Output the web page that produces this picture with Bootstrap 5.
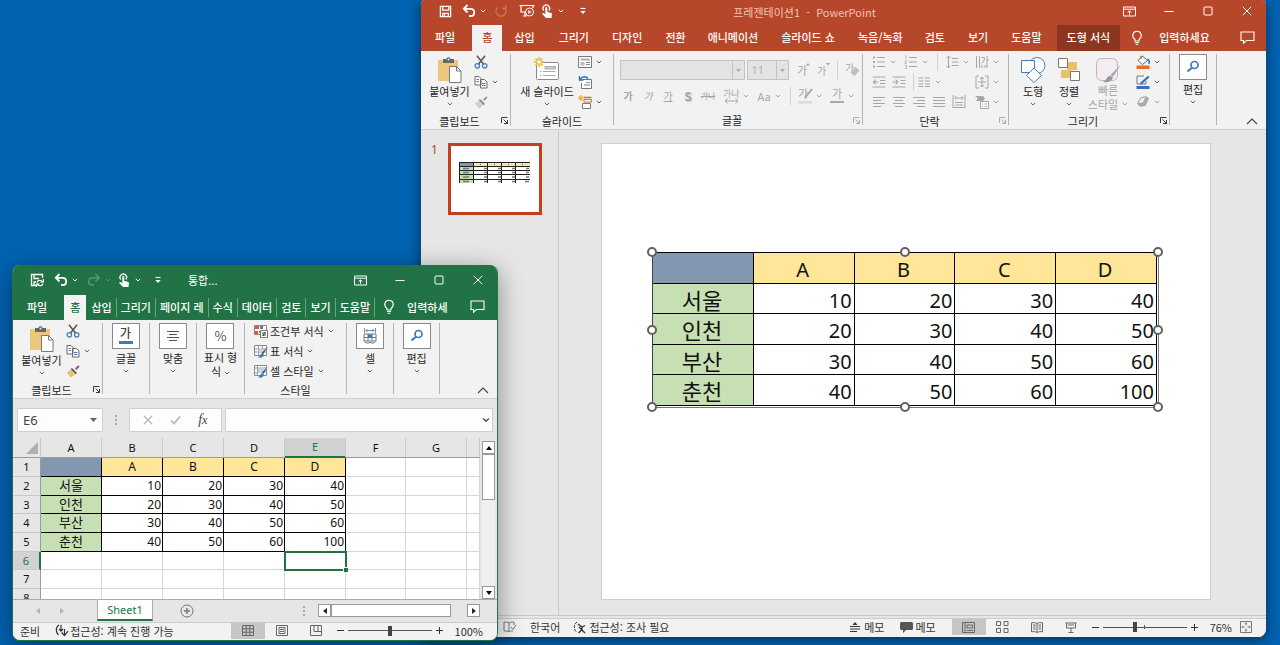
<!DOCTYPE html>
<html lang="ko">
<head>
<meta charset="utf-8">
<meta name="viewport" content="width=device-width, initial-scale=1">
<title>프레젠테이션1 - PowerPoint</title>
<link href="https://cdn.jsdelivr.net/npm/bootstrap@5.3.0/dist/css/bootstrap.min.css" rel="stylesheet">
<style>
html,body{height:100%}
body{font-family:"Noto Sans CJK KR","Noto Sans",sans-serif;font-size:11px;line-height:16px;color:#262626;background:#0063b1;overflow:hidden}
svg{display:block;flex:none;overflow:visible}
.btn{--bs-btn-padding-x:0;--bs-btn-padding-y:0;--bs-btn-border-width:0;--bs-btn-font-size:11px;--bs-btn-line-height:16px;--bs-btn-color:inherit;--bs-btn-disabled-color:#a6a6a6;--bs-btn-disabled-opacity:1;--bs-btn-border-radius:0;--bs-btn-hover-color:inherit;white-space:nowrap}
.desk{height:100vh;position:relative;overflow:hidden}
.win{position:absolute;display:flex;flex-direction:column;background:#e6e6e6;overflow:hidden}
.ppt{left:421px;right:14px;top:0;bottom:8px;border-radius:4px 4px 8px 8px;box-shadow:0 3px 14px rgba(0,0,0,.5)}
.xls{left:12px;width:486px;top:265px;bottom:4px;border-radius:8px;border:1px solid #217346;border-top:0;box-shadow:0 6px 26px rgba(0,0,0,.42)}
.ppt .chrome{background:#b7472a;color:#fff}
.xls .chrome{background:#217346;color:#fff}
.titlebar{height:25px}
.xls .titlebar{height:30px}
.ppt .titlebar{padding:0 0 3px 14px}
.xls .titlebar{padding-left:14px}
.ib{width:20px;height:20px;display:flex!important;align-items:center;justify-content:center}
.cr{width:8px;height:20px;display:flex!important;align-items:center;justify-content:center}
.sys{width:39px;height:22px;display:flex!important;align-items:center;justify-content:center}
.tabs{height:26px;font-weight:500}
.xls .tabs{height:25px}
.tabs a{color:#fff;text-decoration:none;display:flex;align-items:center;white-space:nowrap;padding:0 11px 2px}
.ppt .tabs{padding-left:3px}
.ppt .tabs .on{background:#f2f2f2;color:#b7472a;padding:0 10px 2px;margin:0 1px 0 6px}
.ppt .tabs .ctx{background:#8b3620;padding:0 10px 2px;margin-left:4px}
.xls .tabs a{padding:0 4px 2px}
.xls .tabs .filetab{padding:0 17px 2px 14px}
.xls .tabs .on{background:#f2f2f2;color:#217346;padding:0 6px 2px;margin-right:1px}
.xls .tabs .cut{border-right:1px solid #6aa384;margin:3px 0}
.ribbon{background:#f2f2f2;border-bottom:1px solid #cfcfcf;height:79px;padding-top:1px}
.ribbon use[href="#cv"]{color:#666}
.ribbon .dim use[href="#cv"]{color:#a6a6a6}
.sepv{width:1px;background:#b4b4b4;margin:2px 0 4px;flex:none}
.grp{display:flex;flex-direction:column;flex:none}
.grp .bodyrow{height:60px;display:flex}
.foot{height:18px;display:flex;align-items:center}
.foot span{flex:1;text-align:center}
.launch{width:12px;height:12px}
.launch svg{margin-left:2px}
.big{display:flex!important;flex-direction:column;align-items:center;padding-top:5px!important}
.big .cv{margin-top:3px}
.boxed{display:flex!important;flex-direction:column;align-items:center;padding-top:2px!important}
.boxed .frame{width:28px;height:26px;border:1px solid #8a8a8a;background:#fff;display:flex;align-items:center;justify-content:center;margin-bottom:1px;color:#555}
.boxed .cv{margin-top:3px}
.xls .boxed .lbl{line-height:14px;text-align:center}
.dim{color:#a6a6a6}
.tsep{width:1px;height:18px;background:#d0d0d0;flex:none}
.combo{height:20px;border:1px solid #c3c3c3;background:#e3e3e3 url("data:image/svg+xml,%3Csvg xmlns='http://www.w3.org/2000/svg' width='12' height='18'%3E%3Cpath d='M.5 0V18' stroke='%23c3c3c3'/%3E%3Cpath d='M4 8h5l-2.500 3z' fill='%23aaa'/%3E%3C/svg%3E") right center no-repeat;color:#b5b0a5!important;opacity:1;appearance:none;padding:0 0 0 3px;border-radius:0;font:11px/16px "Noto Sans",sans-serif}
.pane{width:137px;flex:none}
.thumb{width:94px;height:72px;border:3px solid #c43e1c;background:#fff}
.canvas{border-left:1px solid #c8c8c8;padding:12px 55px 15px 42px;margin-top:1px}
.slide{background:#fff;border:1px solid #cfcfcf;padding:108px 51px 0 50px}
.sel{position:relative;border:1px solid #777;border-top:0;border-left:0;padding:0 1px 1px 0}
.hd{position:absolute;width:10px;height:10px;border:2px solid #606060;border-radius:50%;background:#fff;transform:translate(-50%,-50%)}
.stab{width:100%;table-layout:fixed;border-collapse:separate;border-spacing:0;border-top:1px solid #000;border-left:1px solid #444;color:#111;font-family:"Noto Sans","Noto Sans CJK KR",sans-serif;font-size:20px;line-height:24px}
.stab td,.stab th{height:31px;padding:4px 2px 0 0;border-right:1px solid #000;border-bottom:1px solid #000;text-align:right;font-weight:400}
.stab tr:nth-child(even) td,.stab tr:nth-child(even) th{height:30px}
.stab .hx,.stab .hy{text-align:center}
.stab .hy{font-size:22px;line-height:22px;padding-top:2px}
.stab .hx{background:#ffe699}.stab .hy,.gridt .hy{background:#c6e0b4}.gridt .hx{background:#ffe699}
.corner{background:#8497b0}
.status{height:19px;background:#f2f2f2;border-top:1px solid #cbcbcb;color:#333;padding-bottom:1px}
.ppt .status{padding:0 10px 2px 82px}
.view{width:34px;align-self:stretch;display:flex!important;align-items:center;justify-content:center;color:#666!important}
.view.cur{background:#c6c6c6!important}
.zoomr{appearance:none;width:84px;height:12px;margin:0;background:linear-gradient(#555,#555) center/100% 1px no-repeat}
.zoomr::-webkit-slider-thumb{appearance:none;width:4px;height:10px;background:#444;border:0}
.ppt .zoomr{background:linear-gradient(#555,#555) center/100% 1px no-repeat,linear-gradient(#555,#555) center/1px 4px no-repeat}
.fbar{padding:9px 4px 7px;height:39px}
.fbox{background:#fdfdfd;border:1px solid #cfcfcf;height:24px;border-radius:0;color:#333;font:13px/20px "Noto Sans",sans-serif;padding:0 5px}
.namebox{width:86px;appearance:none;background:#fdfdfd url("data:image/svg+xml,%3Csvg xmlns='http://www.w3.org/2000/svg' width='14' height='6'%3E%3Cpath d='M2 1h7L5.500 5z' fill='%23666'/%3E%3C/svg%3E") right center no-repeat}
.namebox,.fbar .btn{color:#444}
.fxb{width:93px}
.fxn{font-family:"Liberation Serif",serif;font-size:14px!important}
.gridt{table-layout:fixed;width:467px;border-collapse:separate;border-spacing:0;background:#fff;font-family:"Noto Sans","Noto Sans CJK KR",sans-serif;font-size:12px;line-height:16px;color:#111}
.gridt th,.gridt td{height:19px;padding:0 1px 0 0;border-right:1px solid #d6d6d6;border-bottom:1px solid #d6d6d6;text-align:right;font-weight:400;overflow:hidden;white-space:nowrap}
.gridt tbody tr:nth-child(3n) td,.gridt tbody tr:nth-child(3n) th{height:18px}
.gridt thead th{height:20px;background:#e6e6e6;text-align:center;padding:0;border-color:#c9c9c9;border-bottom-color:#9b9b9b;font-size:11px}
.gridt tbody .rn{background:#e6e6e6;text-align:center;padding:0;border-color:#c9c9c9;border-right-color:#9b9b9b;font-size:11px}
.gridt thead .act{background:#d2d2d2;color:#217346;border-bottom:2px solid #217346}
.gridt tbody .act{background:#d2d2d2;color:#217346;border-right:2px solid #217346}
.gridt .k{border-color:#000}
.gridt .hx,.gridt .hy{text-align:center;padding:0}
.gridt .hy{font-size:13px;line-height:14px;padding-bottom:2px}
.gridt .cell{position:relative;overflow:visible;outline:2px solid #217346;outline-offset:-1px}
.gridt .cell::after{content:"";position:absolute;right:-3px;bottom:-3px;width:5px;height:5px;background:#217346;border:1px solid #fff;border-width:1px 0 0 1px}
.vs{width:13px;background:#f0f0f0;margin:3px 2px 0 2px}
.sb{width:13px;height:13px;border:1px solid #999!important;background:#fff!important;display:flex!important;align-items:center;justify-content:center;flex:none}
.vthumb{height:46px;border:1px solid #999;background:#fff}
.sheets{height:24px;border-top:1px solid #ababab;padding-right:17px}
.sheets .sheet{width:56px;height:21px;background:#fff;border:1px solid #ababab;border-width:0 1px;border-bottom:2px solid #217346;color:#217346;text-decoration:none;text-align:center;line-height:20px;font-family:"Noto Sans",sans-serif;align-self:flex-start}
.hthumb{width:120px;height:13px;border:1px solid #999;background:#fff}
.xls .status{padding-left:7px}
</style>
</head>
<body>
<svg width="0" height="0" class="position-absolute" aria-hidden="true">
<defs>
<symbol id="cv" viewBox="0 0 6 4"><path d="M.8.8 3 3 5.200.8" fill="none" stroke="currentColor"/></symbol>
<symbol id="save" viewBox="0 0 14 14"><path d="M1.500 1.500h11v11h-11zM4 1.500v4h6.500v-4M4 12.500V9h6v3.500M6 10v2" fill="none" stroke="currentColor" stroke-width="1.400"/></symbol>
<symbol id="savec" viewBox="0 0 14 14"><path d="M6 12.500H1.500v-11h11V5M4 1.500v4h5M4 12V9h2" fill="none" stroke="currentColor" stroke-width="1.300"/><path d="M7 9.500c.6-2.500 4-3 5.500-.8M13.500 6v3h-3M13 10.500c-.6 2.500-4 3-5.500.8M6.500 14v-3h3" fill="none" stroke="currentColor" stroke-width="1.200"/></symbol>
<symbol id="undo" viewBox="0 0 14 14"><path d="M5.500 1 1.800 4.800l3.700 3.700M2 4.800h6.500c5 0 5 7.200 0 7.200H7" fill="none" stroke="currentColor" stroke-width="1.800"/></symbol>
<symbol id="redo" viewBox="0 0 14 14"><path d="M8.500 1l3.700 3.800-3.700 3.700M12 4.800H5.500c-5 0-5 7.200 0 7.200H7" fill="none" stroke="currentColor" stroke-width="1.500"/></symbol>
<symbol id="rep" viewBox="0 0 14 14"><path d="M3.500 3.500A5 5 0 1 0 11 4M11.800 1v3.500H8.300" fill="none" stroke="currentColor" stroke-width="1.400"/></symbol>
<symbol id="show" viewBox="0 0 16 14"><path d="M.5 1.500h15M2 1.500V8h4M4 12h4M6 8.500V12M14 1.500V4" fill="none" stroke="currentColor" stroke-width="1.200"/><circle cx="10.500" cy="8" r="4" fill="none" stroke="currentColor"/><path d="m9.300 6 3.200 2-3.200 2z" fill="currentColor"/></symbol>
<symbol id="touch" viewBox="0 0 12 15"><path d="M2.800 6.500a3.300 3.300 0 1 1 5 0" fill="none" stroke="currentColor" stroke-width="1.300"/><path d="M4.300 4a1 1 0 0 1 2 0v4l3.200.7c1 .2 1.500.8 1.400 1.700L10.500 14H5L1 9.800c.6-.9 1.500-.9 2.300-.2l1 .8z" fill="currentColor"/></symbol>
<symbol id="cust" viewBox="0 0 8 8"><path d="M1.500 1.500h5" stroke="currentColor" stroke-width="1.200"/><path d="M1.300 4h5.400L4 7z" fill="currentColor"/></symbol>
<symbol id="ropt" viewBox="0 0 13 11"><path d="M.5 1h12v9H.5zM.5 3.200h12M6.500 8.800V5M4.600 6.700 6.500 4.800l1.900 1.900" fill="none" stroke="currentColor"/></symbol>
<symbol id="min" viewBox="0 0 10 10"><path d="M.5 5.500h9" stroke="currentColor"/></symbol>
<symbol id="max" viewBox="0 0 10 10"><rect x="1" y="1" width="8" height="8" rx="1" fill="none" stroke="currentColor"/></symbol>
<symbol id="cls" viewBox="0 0 10 10"><path d="m.8.8 8.400 8.400M9.200.8.8 9.200" stroke="currentColor"/></symbol>
<symbol id="bulb" viewBox="0 0 12 15"><path d="M4 11V9.500C.2 6.500 1.500 1.300 6 1.300s5.800 5.200 2 8.200V11zM4 12.500h4M4.700 14.200h2.600" fill="none" stroke="currentColor" stroke-width="1.100"/></symbol>
<symbol id="cmt" viewBox="0 0 15 13"><path d="M1 1h13v8.500H6.500l-3 2.700V9.500H1z" fill="none" stroke="currentColor" stroke-width="1.100"/></symbol>
<symbol id="paste" viewBox="0 0 26 26"><path d="M1 3h20v21H1z" fill="#ecc67c"/><path d="M6 2h3.500c0-2.500 4-2.500 4 0H17v4H6z" fill="#666"/><circle cx="11.500" cy="2.500" r="1" fill="#f2f2f2"/><path d="M12.500 9.500h7l4.500 4.500v11.500H12.500z" fill="#fff" stroke="#777"/><path d="M19.500 9.500V14H24" fill="none" stroke="#777"/></symbol>
<symbol id="cut" viewBox="0 0 14 14"><path d="M3 .8 9.800 9.500M11 .8 4.200 9.500" stroke="#555" stroke-width="1.500"/><circle cx="3.300" cy="10.800" r="2.200" fill="none" stroke="#4a7ebb" stroke-width="1.300"/><circle cx="10.700" cy="10.800" r="2.200" fill="none" stroke="#4a7ebb" stroke-width="1.300"/></symbol>
<symbol id="copy" viewBox="0 0 14 14"><path d="M1 1.500h4l2 2V10H1zM6.500 4.500h4L13 7v6H6.500z" fill="#fff" stroke="#6a6a6a"/><path d="M2.500 4.500H5M2.500 6.500H5M8 8.500h3.500M8 10.500h3.500" stroke="#4a7ebb"/></symbol>
<symbol id="brushg" viewBox="0 0 14 14"><path d="m9 4.500 3.200-3.200 1.300 1.400L10.300 6z" fill="#999"/><path d="m6 4 5 5-1.500 1.300-4.800-5z" fill="#888"/><path d="M4.500 6 9 10.500 5 13.500.8 8.500z" fill="#d2cfcf"/></symbol>
<symbol id="brushy" viewBox="0 0 14 14"><path d="m9 4.500 3.200-3.200 1.300 1.400L10.300 6z" fill="#666"/><path d="m6 4 5 5-1.500 1.300-4.800-5z" fill="#555"/><path d="M4.500 6 9 10.500 5 13.500.8 8.500z" fill="#ecc06c"/></symbol>
<symbol id="news" viewBox="0 0 26 26"><rect x="2.500" y="5.500" width="22" height="17" rx="1" fill="#fff" stroke="#888"/><path d="M11 9.500h10.500v2.500H11zM6 14.500h1.500M9 14.500h12.500M6 18.500h1.500M9 18.500h12.500" fill="#d0d0d0" stroke="#aaa"/><path d="M5 0v10M0 5h10M1.500 1.500l7 7M8.500 1.500l-7 7" stroke="#eeb22f" stroke-width="1.600"/><circle cx="5" cy="5" r="1.800" fill="#fff"/></symbol>
<symbol id="lay" viewBox="0 0 14 14"><path d="M.5 1.500h13v11H.5z" fill="#fff" stroke="#777"/><path d="M2.500 3.500h9v2h-9z" fill="#aaa"/><path d="M2.500 7h4v3.500h-4z" fill="#bbb"/><path d="M8 7.500h4M8 9.500h4" stroke="#888"/></symbol>
<symbol id="reset" viewBox="0 0 14 14"><path d="M4.500 4.500h9v9h-10V8" fill="#fff" stroke="#777"/><path d="M6 10h6M8 7.500h4" stroke="#aaa" stroke-width="1.500"/><path d="M1.500 1v4h4M2 4.500C4 1 8 1 10 3.500" fill="none" stroke="#2e75b6" stroke-width="1.400"/></symbol>
<symbol id="sect" viewBox="0 0 14 14"><path d="M4.500 8.500h8v5h-8z" fill="#fff" stroke="#777"/><path d="M6 4.500h7.500V7H6z" fill="#fff" stroke="#d86b35"/><path d="M3 0v6M0 3h6M1 1l4 4M5 1 1 5" stroke="#e9a72c"/><path d="M6 2.500h7.500" stroke="#d86b35" stroke-width="1.500"/></symbol>
<symbol id="lch" viewBox="0 0 9 9"><path d="M1.500 7V1.500h6M3.500 3.500l4 4M7.500 4v3.500H4" fill="none" stroke="currentColor" stroke-width=".9"/></symbol>
<symbol id="bul" viewBox="0 0 14 14"><path d="M1 2.500h2M1 7h2M1 11.500h2" stroke="currentColor" stroke-width="2"/><path d="M5 2.500h8M5 7h8M5 11.500h8" stroke="currentColor"/></symbol>
<symbol id="num" viewBox="0 0 14 14"><path d="M1 .8h1v3M.8 6h1.700L1 8.500h1.700M.8 10.500h1.700v3H.8" fill="none" stroke="currentColor" stroke-width=".8"/><path d="M5 2.500h8M5 7h8M5 11.500h8" stroke="currentColor"/></symbol>
<symbol id="lsp" viewBox="0 0 14 14"><path d="M3.500 1v12M1.300 3.200 3.500 1l2.200 2.200M1.300 10.800 3.500 13l2.200-2.200M7 3.500h6.500M7 7h6.500M7 10.500h6.500" fill="none" stroke="currentColor"/></symbol>
<symbol id="tdir" viewBox="0 0 14 14"><path d="M1.500 1v12M4.500 1v12M7 10v3M10 10v3M6.500 2.500h3c0 3-1 4.500-3 5.500M12 1v12M12 5h2" fill="none" stroke="currentColor"/></symbol>
<symbol id="outd" viewBox="0 0 14 14"><path d="M.5 2h13M.5 12h13M8 5.500h5.500M8 8.500h5.500M6.500 7H1.500M3.700 4.700 1.400 7l2.300 2.300" fill="none" stroke="currentColor" stroke-width="1.100"/></symbol>
<symbol id="ind" viewBox="0 0 14 14"><path d="M.5 2h13M.5 12h13M8.500 5.500h5M8.500 8.500h5M.5 7h5.300M3.700 4.700 6 7 3.700 9.300" fill="none" stroke="currentColor" stroke-width="1.100"/></symbol>
<symbol id="colm" viewBox="0 0 14 14"><path d="M1.500 3H6.500M1.500 6H6.500M1.500 9H6.500M1.500 11.500H6.500M8 3h5M8 6h5M8 9h5M8 11.500h5" stroke="currentColor"/></symbol>
<symbol id="valn" viewBox="0 0 14 14"><path d="M4 1H1v12h3M10 1h3v12h-3M7 2v10M5 4l2-2 2 2M5 10l2 2 2-2M3 7h8" fill="none" stroke="currentColor"/></symbol>
<symbol id="al" viewBox="0 0 14 14"><path d="M1 2.500h12M1 5.500h8M1 8.500h12M1 11.500h8" stroke="currentColor"/></symbol>
<symbol id="ac" viewBox="0 0 14 14"><path d="M1 2.500h12M3 5.500h8M1 8.500h12M3 11.500h8" stroke="currentColor"/></symbol>
<symbol id="ar" viewBox="0 0 14 14"><path d="M1 2.500h12M5 5.500h8M1 8.500h12M5 11.500h8" stroke="currentColor"/></symbol>
<symbol id="aj" viewBox="0 0 14 14"><path d="M1 2.500h12M1 5.500h12M1 8.500h12M1 11.500h12" stroke="currentColor"/></symbol>
<symbol id="dist" viewBox="0 0 14 14"><path d="M1 0v13M13 0v13M3 3h8M4.500 1.200 2.700 3l1.800 1.800M9.500 1.200 11.300 3 9.500 4.800M3 7.500h8M3 10h8M1 12.500h12" fill="none" stroke="currentColor"/></symbol>
<symbol id="smart" viewBox="0 0 14 14"><path d="M0 1h8l2 2.500L8 6H1l2-2.500z" fill="currentColor"/><path d="M5.500 6.500h8v7h-8z" fill="#fff" stroke="currentColor"/><path d="M7 9h1M9.500 9H12M7 11.500h1M9.500 11.500H12" stroke="currentColor"/></symbol>
<symbol id="shapes" viewBox="0 0 26 26"><circle cx="17" cy="8.500" r="8" fill="#fff" stroke="#3f7fbf"/><path d="M1.500 3.500h13v12h-13z" fill="#fff" stroke="#3f7fbf"/><path d="m14 11 7.500 7.500L14 25.500 6.500 18.500z" fill="#fff" stroke="#3f7fbf"/></symbol>
<symbol id="arr" viewBox="0 0 26 26"><path d="M11 5h10v8H11zM5 13h10v8H5z" fill="#ecc067"/><path d="M2.500 1.500h9v9h-9zM14.500 14.500h9v9h-9z" fill="#fff" stroke="#777"/></symbol>
<symbol id="quick" viewBox="0 0 26 26"><rect x="1.500" y="1.500" width="21" height="22" rx="5" fill="#f3ecf2" stroke="#b9b9b9"/><path d="m25.500 8-7.500 12-2.500-2z" fill="#aaa"/><path d="M15 18.500l2.800 2c-.5 4-5 5.500-9.800 4.500 4-1.500 3-5 7-6.500z" fill="#999"/></symbol>
<symbol id="fill" viewBox="0 0 14 14"><path d="M.5 10.500h13V14H.5z" fill="#ee6c1c"/><path d="m6.500 1 5 4.500-5 4-4.500-4z" fill="#fff" stroke="#666"/><path d="M5 4V.8" stroke="#666"/><path d="M11.500 4c2 1 2 3 1.500 5" fill="none" stroke="#2e75b6" stroke-width="1.500"/></symbol>
<symbol id="line" viewBox="0 0 14 14"><path d="M.5 11h13v3H.5z" fill="#3a6cc5"/><path d="M8 1H1v8h9V6" fill="none" stroke="#777"/><path d="m12 .8 1.500 1.500L6 9l-2 .5.5-2z" fill="#2e75b6"/></symbol>
<symbol id="eff" viewBox="0 0 14 14"><path d="m5 2 6-.5 2 2-3.500 7.500-5.500.7-3-3.200z" fill="#a9a9a9"/><path d="m5 2.500 5-.5-3 6-5.500.5z" fill="#f0f0f0" stroke="#a9a9a9"/></symbol>
<symbol id="find" viewBox="0 0 14 14"><circle cx="8.500" cy="5" r="3.500" fill="none" stroke="#3f78b5" stroke-width="1.700"/><path d="M6 7.800 1.500 11.500" stroke="#3f78b5" stroke-width="2"/></symbol>
<symbol id="colp" viewBox="0 0 12 7"><path d="M1 6 6 1l5 5" fill="none" stroke="#444" stroke-width="1.100"/></symbol>
<symbol id="cf" viewBox="0 0 14 14"><path d="M.5 1.500h12v9H.5z" fill="#fff" stroke="#888"/><path d="M1 2h4v3H1zM1 7h3v3H1z" fill="#dd5a2b"/><path d="M6 2h3v3H6zM5 7h3v2H5z" fill="#4a7ebb"/><path d="M6.500 6.500h7v7h-7z" fill="#fff" stroke="#777"/><path d="M8 9h4M8 11h4M11 8l-2 4" stroke="#444"/></symbol>
<symbol id="tf" viewBox="0 0 14 14"><path d="M.5 1.500h12v10H.5z" fill="#fff" stroke="#888"/><path d="M4.500 1.500v10M8.500 1.500v10M.5 5h12M.5 8h12" stroke="#999"/><path d="M4.500 5H11v3H4.500z" fill="#bcd4ee"/><path d="m13.500 3-4 7-2-1z" fill="#555"/><path d="M7.500 9.500l2.500 1c0 2.500-2.500 3.500-6 3 2-1 1.500-3 3.500-4z" fill="#3f7fc0"/></symbol>
<symbol id="cs" viewBox="0 0 14 14"><path d="M.5 1.500h12v10H.5z" fill="#fff" stroke="#888"/><path d="M3.500 1.500v10M.5 4h12M.5 9h3" stroke="#999"/><path d="M4 4.500h8V9H4z" fill="#bcd4ee"/><path d="m13.500 3-4 7-2-1z" fill="#555"/><path d="M7.500 9.500l2.500 1c0 2.500-2.500 3.500-6 3 2-1 1.500-3 3.500-4z" fill="#3f7fc0"/></symbol>
<symbol id="cellsi" viewBox="0 0 16 16"><path d="M2.500 0v5M13.500 0v5M4 2.500h8M5.500 1 4 2.500 5.500 4M10.500 1 12 2.500 10.500 4" fill="none" stroke="#3f78b5" stroke-width=".8"/><path d="M2 6h12v7H2zM2 9.500h12M6 6v7M10 6v7" fill="#fff" stroke="#777"/><path d="M6 6.500h4v3H6z" fill="#3f78b5"/><path d="M2.500 13.500 4 15h3l1-1 1 1h3l1.500-1.500" fill="none" stroke="#777"/></symbol>
<symbol id="book" viewBox="0 0 14 12"><path d="M6 2v9M6 2C5 1 3 1 1 1.200V10c2-.2 4 0 5 1 1-1 2-1 4-1M6 2c1-1 3-1 5-.8V4M8 6l2 2.500L13 4" fill="none" stroke="#777"/></symbol>
<symbol id="acx" viewBox="0 0 14 13"><path d="M4 1C.5 3 .5 8.500 3.500 11" fill="none" stroke="currentColor" stroke-dasharray="3 1"/><path d="M5 3l4 3 3-1.500M9 6v3l3 3M9 8.500 5.500 12M6 6l5 5" fill="none" stroke="currentColor" stroke-width="1.300"/></symbol>
<symbol id="acc" viewBox="0 0 14 13"><path d="M4 1C.5 3 .5 8.500 3.500 11M6 1v6M4 5l2 2.200L8 5M6.500 8.500 9.500 11.500 13 7M9.500 5v6" fill="none" stroke="currentColor" stroke-width="1.200"/></symbol>
<symbol id="note" viewBox="0 0 10 10"><path d="M5 0 7.500 3h-5z" fill="currentColor"/><path d="M0 4.500h10M0 7h10M0 9.500h7" stroke="currentColor"/></symbol>
<symbol id="spch" viewBox="0 0 13 11"><path d="M1.500 0h10q1.500 0 1.500 1.500v5Q13 8 11.500 8H6l-3 3V8H1.500Q0 8 0 6.500v-5Q0 0 1.500 0z" fill="#555"/></symbol>
<symbol id="vnorm" viewBox="0 0 13 11"><path d="M.5.5h12v10H.5zM3 .5v10M5 3h5.500v3H5zM5 8.500h6" fill="none" stroke="currentColor"/></symbol>
<symbol id="vsort" viewBox="0 0 13 12"><path d="M.5.500h4v4h-4zM8 .5h4v4H8zM.5 7.500h4v4h-4zM8 7.500h4v4H8z" fill="none" stroke="currentColor"/></symbol>
<symbol id="vread" viewBox="0 0 12 11"><path d="M6 1.500v9M6 1.500C4.500.5 2.500.5.500.8v9c2-.3 4-.3 5.500.7 1.500-1 3.500-1 5.500-.7v-9C9.500.5 7.500.5 6 1.500M2 3h2.500M2 5h2.500M2 7h2.500M7.500 3H10M7.500 5H10M7.500 7H10" fill="none" stroke="currentColor"/></symbol>
<symbol id="vshow" viewBox="0 0 12 11"><path d="M.5 1h11M1.500 1v5h9V1M6 6v4M3.500 10.500h5M3 3h6" fill="none" stroke="currentColor"/></symbol>
<symbol id="fit" viewBox="0 0 12 12"><path d="M.5.500h11v11H.5zM6 1.800v2.700M6 7.500v2.700M1.800 6h2.700M7.500 6h2.700M5 2.800l1-1 1 1M5 9.200l1 1 1-1M2.800 5l-1 1 1 1M9.200 5l1 1-1 1" fill="none" stroke="#777"/></symbol>
<symbol id="vgrid" viewBox="0 0 12 11"><path d="M.5.500h11v10H.5zM4.200.5v10M7.800.5v10M.5 3.800h11M.5 7.200h11" fill="none" stroke="currentColor"/></symbol>
<symbol id="vpage" viewBox="0 0 12 11"><path d="M.5.500h11v10H.5zM3 2.500h6v6H3zM4 4.500h4M4 6.500h4" fill="none" stroke="currentColor"/></symbol>
<symbol id="vbrk" viewBox="0 0 12 11"><path d="M.5.500h11v10H.5zM4 .5v6M8 .5v6M4 6.500h7.500" fill="none" stroke="currentColor"/></symbol>
<symbol id="tu" viewBox="0 0 6 4"><path d="M0 4 3 0l3 4z"/></symbol>
<symbol id="td" viewBox="0 0 6 4"><path d="M0 0l3 4 3-4z"/></symbol>
<symbol id="tl" viewBox="0 0 4 6"><path d="M4 0 0 3l4 3z" fill="currentColor"/></symbol>
<symbol id="tr" viewBox="0 0 4 6"><path d="M0 0l4 3-4 3z" fill="currentColor"/></symbol>
</defs>
</svg>

<main class="desk">

<!-- PowerPoint -->
<section class="win ppt">
  <header class="chrome">
    <div class="titlebar d-flex align-items-center">
      <button class="btn ib" aria-label="저장"><svg width="13" height="13"><use href="#save"/></svg></button>
      <button class="btn ib ms-1" aria-label="실행 취소"><svg width="14" height="14"><use href="#undo"/></svg></button>
      <button class="btn cr" aria-label="실행 취소 목록"><svg width="6" height="4"><use href="#cv"/></svg></button>
      <button class="btn ib ms-1 opacity-25" aria-label="반복"><svg width="14" height="14"><use href="#rep"/></svg></button>
      <button class="btn ib" style="margin-left:6px" aria-label="슬라이드 쇼 시작"><svg width="16" height="14"><use href="#show"/></svg></button>
      <button class="btn ib" aria-label="터치"><svg width="12" height="15"><use href="#touch"/></svg></button>
      <button class="btn cr" aria-label="터치 목록"><svg width="6" height="4"><use href="#cv"/></svg></button>
      <button class="btn ib ms-2" aria-label="빠른 실행 사용자 지정"><svg width="8" height="8"><use href="#cust"/></svg></button>
      <div class="flex-fill text-center" style="padding-right:94px;color:#f0c4b6;padding-top:2px">프레젠테이션1&nbsp; -&nbsp; PowerPoint</div>
      <button class="btn sys" aria-label="리본 표시 옵션"><svg width="13" height="11"><use href="#ropt"/></svg></button>
      <button class="btn sys" aria-label="최소화"><svg width="10" height="10"><use href="#min"/></svg></button>
      <button class="btn sys" aria-label="최대화"><svg width="10" height="10"><use href="#max"/></svg></button>
      <button class="btn sys" aria-label="닫기"><svg width="10" height="10"><use href="#cls"/></svg></button>
    </div>
    <nav class="tabs d-flex">
      <a href="#">파일</a><a href="#" class="on">홈</a><a href="#">삽입</a><a href="#" style="margin-left:2px">그리기</a><a href="#" style="margin-left:1px">디자인</a><a href="#" style="margin-left:1px">전환</a><a href="#">애니메이션</a><a href="#" style="margin-left:1px">슬라이드 쇼</a><a href="#" style="margin-left:1px">녹음/녹화</a><a href="#">검토</a><a href="#" style="margin-left:1px">보기</a><a href="#" style="margin-left:1px">도움말</a><a href="#" class="ctx">도형 서식</a>
      <a href="#"><svg width="12" height="15" class="me-2"><use href="#bulb"/></svg><span class="ms-2">입력하세요</span></a>
      <a href="#" class="ms-auto" aria-label="메모"><svg width="15" height="13"><use href="#cmt"/></svg></a>
    </nav>
  </header>

  <div class="ribbon d-flex">
    <div class="grp" style="width:89px">
      <div class="bodyrow" style="padding-left:7px">
        <button class="btn big" style="width:43px"><svg width="26" height="26"><use href="#paste"/></svg>붙여넣기<svg class="cv" width="6" height="4"><use href="#cv"/></svg></button>
        <div>
          <button class="btn ib" aria-label="잘라내기"><svg width="14" height="14"><use href="#cut"/></svg></button>
          <div class="d-flex"><button class="btn ib" aria-label="복사"><svg width="14" height="14"><use href="#copy"/></svg></button><button class="btn cr" aria-label="복사 목록"><svg width="6" height="4"><use href="#cv"/></svg></button></div>
          <button class="btn ib" aria-label="서식 복사"><svg width="14" height="14"><use href="#brushg"/></svg></button>
        </div>
      </div>
      <div class="foot"><span>클립보드</span><button class="btn launch" aria-label="클립보드 옵션"><svg width="9" height="9"><use href="#lch"/></svg></button></div>
    </div>
    <div class="sepv"></div>
    <div class="grp" style="width:102px">
      <div class="bodyrow" style="padding-left:8px">
        <button class="btn big" style="width:56px"><svg width="26" height="26"><use href="#news"/></svg>새 슬라이드<svg class="cv" width="6" height="4"><use href="#cv"/></svg></button>
        <div>
          <div class="d-flex"><button class="btn ib" aria-label="레이아웃"><svg width="14" height="14"><use href="#lay"/></svg></button><button class="btn cr" aria-label="레이아웃 목록"><svg width="6" height="4"><use href="#cv"/></svg></button></div>
          <button class="btn ib" aria-label="다시 설정"><svg width="14" height="14"><use href="#reset"/></svg></button>
          <div class="d-flex"><button class="btn ib" aria-label="구역"><svg width="14" height="14"><use href="#sect"/></svg></button><button class="btn cr" aria-label="구역 목록"><svg width="6" height="4"><use href="#cv"/></svg></button></div>
        </div>
      </div>
      <div class="foot"><span>슬라이드</span></div>
    </div>
    <div class="sepv"></div>
    <div class="grp dim" style="width:248px">
      <div class="bodyrow flex-column ps-1 pt-2">
        <div class="d-flex align-items-center" style="padding-left:2px">
          <select class="combo" style="width:126px" disabled aria-label="글꼴"><option></option></select>
          <select class="combo" style="width:42px;margin-left:2px" disabled aria-label="글꼴 크기"><option>11</option></select>
          <button class="btn ib ms-1" disabled aria-label="글꼴 크게"><svg width="13" height="14" viewBox="0 0 13 14"><text x="0" y="12" font-size="11" fill="currentColor">가</text><path d="m9 2.500 2-2.500 2 2.500z" fill="currentColor"/></svg></button>
          <button class="btn ib" disabled aria-label="글꼴 작게"><svg width="13" height="14" viewBox="0 0 13 14"><text x="0" y="12" font-size="10" fill="currentColor">가</text><path d="m9 0 2 2.500L13 0z" fill="currentColor"/></svg></button>
          <span class="tsep" style="margin:0 4px"></span>
          <button class="btn ib" disabled aria-label="서식 지우기"><svg width="15" height="14" viewBox="0 0 15 14"><text x="0" y="9" font-size="10" fill="currentColor">가</text><path d="m10.500 4 4 3.500-5 5.500-4-3.500z" fill="#c0bcc0"/></svg></button>
        </div>
        <div class="d-flex align-items-center pt-1" style="margin-top:2px">
          <button class="btn ib fw-bold" disabled style="font-size:10px">가</button>
          <button class="btn ib fst-italic" disabled style="font-size:10px">가</button>
          <button class="btn ib" disabled style="font-size:10px"><u>가</u></button>
          <button class="btn ib fw-bold" disabled style="font-size:12px;text-shadow:1px 1px 1px #bbb">S</button>
          <button class="btn ib" disabled style="font-size:8px"><s>가나</s></button>
          <button class="btn ib ms-1" disabled aria-label="문자 간격"><svg width="16" height="16" viewBox="1 0 16 16"><text x="0" y="9" font-size="9" fill="currentColor">가나</text><path d="M2 13h13M4.500 10.500 2 13l2.500 2.500M12.500 10.500 15 13l-2.500 2.500" fill="none" stroke="currentColor"/></svg></button><span class="cr"><svg width="6" height="4"><use href="#cv"/></svg></span>
          <button class="btn ib ms-1" disabled>Aa</button><span class="cr"><svg width="6" height="4"><use href="#cv"/></svg></span>
          <span class="tsep ms-2 me-1"></span>
          <button class="btn ib" disabled aria-label="강조색"><svg width="15" height="16" viewBox="0 0 15 16"><text x="0" y="10" font-size="11" fill="currentColor">가</text><path d="M14 1 7 10" stroke="currentColor" stroke-width="2"/><path d="M0 13h14v2.500H0z" fill="#e3d6e3"/></svg></button><span class="cr"><svg width="6" height="4"><use href="#cv"/></svg></span>
          <button class="btn ib ms-1" disabled aria-label="글꼴 색"><svg width="14" height="16" viewBox="0 0 14 16"><text x="2" y="10" font-size="11" fill="currentColor">가</text><path d="M0 13h14v2H0z" fill="currentColor"/></svg></button><span class="cr"><svg width="6" height="4"><use href="#cv"/></svg></span>
        </div>
      </div>
      <div class="foot"><span class="text-dark">글꼴</span><button class="btn launch" disabled aria-label="글꼴 옵션"><svg width="9" height="9"><use href="#lch"/></svg></button></div>
    </div>
    <div class="sepv"></div>
    <div class="grp dim" style="width:145px">
      <div class="bodyrow flex-column" style="padding:0 8px 0 6px">
        <div class="d-flex align-items-center">
          <button class="btn ib" disabled aria-label="글머리"><svg width="14" height="14"><use href="#bul"/></svg></button><span class="cr"><svg width="6" height="4"><use href="#cv"/></svg></span>
          <button class="btn ib ms-1" disabled aria-label="번호"><svg width="14" height="14"><use href="#num"/></svg></button><span class="cr"><svg width="6" height="4"><use href="#cv"/></svg></span>
          <span class="tsep ms-2 me-1"></span>
          <button class="btn ib" disabled aria-label="줄 간격"><svg width="14" height="14"><use href="#lsp"/></svg></button><span class="cr"><svg width="6" height="4"><use href="#cv"/></svg></span>
          <button class="btn ib ms-auto" disabled aria-label="텍스트 방향"><svg width="14" height="14"><use href="#tdir"/></svg></button><span class="cr"><svg width="6" height="4"><use href="#cv"/></svg></span>
        </div>
        <div class="d-flex align-items-center">
          <button class="btn ib" disabled aria-label="내어쓰기"><svg width="14" height="14"><use href="#outd"/></svg></button>
          <button class="btn ib" disabled aria-label="들여쓰기"><svg width="14" height="14"><use href="#ind"/></svg></button>
          <span class="tsep ms-1"></span>
          <button class="btn ib" disabled aria-label="열"><svg width="14" height="14"><use href="#colm"/></svg></button><span class="cr"><svg width="6" height="4"><use href="#cv"/></svg></span>
          <button class="btn ib ms-auto" disabled aria-label="텍스트 맞춤"><svg width="14" height="14"><use href="#valn"/></svg></button><span class="cr"><svg width="6" height="4"><use href="#cv"/></svg></span>
        </div>
        <div class="d-flex align-items-center">
          <button class="btn ib" disabled aria-label="왼쪽"><svg width="14" height="14"><use href="#al"/></svg></button>
          <button class="btn ib" disabled aria-label="가운데"><svg width="14" height="14"><use href="#ac"/></svg></button>
          <button class="btn ib" disabled aria-label="오른쪽"><svg width="14" height="14"><use href="#ar"/></svg></button>
          <button class="btn ib" disabled aria-label="양쪽"><svg width="14" height="14"><use href="#aj"/></svg></button>
          <button class="btn ib" disabled aria-label="균등"><svg width="14" height="14"><use href="#dist"/></svg></button>
          <button class="btn ib ms-auto" disabled aria-label="SmartArt"><svg width="14" height="14"><use href="#smart"/></svg></button><span class="cr"><svg width="6" height="4"><use href="#cv"/></svg></span>
        </div>
      </div>
      <div class="foot"><span class="text-dark">단락</span><button class="btn launch" disabled aria-label="단락 옵션"><svg width="9" height="9"><use href="#lch"/></svg></button></div>
    </div>
    <div class="sepv"></div>
    <div class="grp" style="width:160px">
      <div class="bodyrow" style="padding-left:6px">
        <button class="btn big" style="width:36px"><svg width="26" height="26"><use href="#shapes"/></svg>도형<svg class="cv" width="6" height="4"><use href="#cv"/></svg></button>
        <button class="btn big" style="width:36px"><svg width="26" height="26"><use href="#arr"/></svg>정렬<svg class="cv" width="6" height="4"><use href="#cv"/></svg></button>
        <button class="btn big dim" style="width:42px;height:60px" disabled><svg width="26" height="26"><use href="#quick"/></svg><span style="line-height:14px">빠른</span><span class="d-flex align-items-center" style="line-height:14px">스타일<svg class="ms-1" width="6" height="4"><use href="#cv"/></svg></span></button>
        <div class="ms-1">
          <div class="d-flex"><button class="btn ib" aria-label="도형 채우기"><svg width="14" height="14"><use href="#fill"/></svg></button><span class="cr"><svg width="6" height="4"><use href="#cv"/></svg></span></div>
          <div class="d-flex"><button class="btn ib" aria-label="도형 윤곽선"><svg width="14" height="14"><use href="#line"/></svg></button><span class="cr"><svg width="6" height="4"><use href="#cv"/></svg></span></div>
          <div class="d-flex"><button class="btn ib" aria-label="도형 효과"><svg width="14" height="14"><use href="#eff"/></svg></button><span class="cr dim"><svg width="6" height="4"><use href="#cv"/></svg></span></div>
        </div>
      </div>
      <div class="foot"><span>그리기</span><button class="btn launch" aria-label="그리기 옵션"><svg width="9" height="9"><use href="#lch"/></svg></button></div>
    </div>
    <div class="sepv"></div>
    <div class="grp align-items-center" style="width:46px">
      <button class="btn boxed"><span class="frame"><svg width="14" height="14"><use href="#find"/></svg></span>편집<svg class="cv" width="6" height="4"><use href="#cv"/></svg></button>
    </div>
    <div class="sepv"></div>
    <button class="btn ms-auto align-self-end pb-1 pe-2" aria-label="리본 메뉴 축소"><svg width="12" height="7"><use href="#colp"/></svg></button>
  </div>

  <div class="d-flex flex-fill">
    <aside class="pane d-flex align-items-start" style="padding:13px 0 0 10px">
      <span style="color:#c43e1c;font:12px/14px 'Noto Sans',sans-serif;width:17px">1</span>
      <div class="thumb">
        <svg width="88" height="66" viewBox="0 0 88 66" aria-hidden="true">
          <path d="M8 16h15v4.500H8z" fill="#8497b0"/><path d="M23 16h56v4.500H23z" fill="#ffe699"/><path d="M8 20.500h15V37H8z" fill="#c6e0b4"/>
          <path d="M8 16.500h71M8 20.500h71M8 24.500h71M8 28.500h71M8 33.500h71M8.500 16v21M22.500 16v21M36.500 16v21M50.500 16v21M64.500 16v21" stroke="#222" fill="none"/>
          <path d="M12 22.500h6M12 26.500h6M12 31h6M12 35.500h6M33 22.500h3M47 22.500h3M61 22.500h3M75 22.500h3M33 26.500h3M47 26.500h3M61 26.500h3M75 26.500h3M33 31h3M47 31h3M61 31h3M75 31h3M33 35.500h3M47 35.500h3M61 35.500h3M74 35.500h4M29 18.500h1M43 18.500h1M57 18.500h1M71 18.500h1" stroke="#777" stroke-width="1.500"/>
        </svg>
      </div>
    </aside>
    <div class="canvas flex-fill d-flex">
      <div class="slide flex-fill">
        <div class="sel">
          <table class="stab">
            <tr><th class="corner"></th><th class="hx">A</th><th class="hx">B</th><th class="hx">C</th><th class="hx">D</th></tr>
            <tr><th class="hy">서울</th><td>10</td><td>20</td><td>30</td><td>40</td></tr>
            <tr><th class="hy">인천</th><td>20</td><td>30</td><td>40</td><td>50</td></tr>
            <tr><th class="hy">부산</th><td>30</td><td>40</td><td>50</td><td>60</td></tr>
            <tr><th class="hy">춘천</th><td>40</td><td>50</td><td>60</td><td>100</td></tr>
          </table>
          <i class="hd top-0 start-0"></i><i class="hd top-0 start-50"></i><i class="hd top-0 start-100"></i>
          <i class="hd top-50 start-0"></i><i class="hd top-50 start-100"></i>
          <i class="hd top-100 start-0"></i><i class="hd top-100 start-50"></i><i class="hd top-100 start-100"></i>
        </div>
      </div>
    </div>
  </div>
  <div style="height:3px;border-top:1px solid #c8c8c8"></div>
  <footer class="status d-flex align-items-center">
    <button class="btn" aria-label="맞춤법 검사"><svg width="14" height="12"><use href="#book"/></svg></button>
    <button class="btn" style="margin-left:13px">한국어</button>
    <button class="btn d-flex align-items-center" style="margin-left:13px"><svg width="14" height="13" style="margin-right:2px"><use href="#acx"/></svg>접근성: 조사 필요</button>
    <button class="btn d-flex align-items-center ms-auto me-3"><svg width="10" height="10" class="me-1"><use href="#note"/></svg>메모</button>
    <button class="btn d-flex align-items-center me-3"><svg width="13" height="11" style="margin-right:2px"><use href="#spch"/></svg>메모</button>
    <button class="btn view cur" aria-label="기본"><svg width="13" height="11"><use href="#vnorm"/></svg></button>
    <button class="btn view" aria-label="여러 슬라이드"><svg width="13" height="12"><use href="#vsort"/></svg></button>
    <button class="btn view" aria-label="읽기용 보기"><svg width="12" height="11"><use href="#vread"/></svg></button>
    <button class="btn view" aria-label="슬라이드 쇼"><svg width="12" height="11"><use href="#vshow"/></svg></button>
    <button class="btn ms-1" aria-label="축소"><svg width="7" height="7" viewBox="0 0 7 7"><path d="M0 3.500h7" stroke="currentColor"/></svg></button>
    <input type="range" class="zoomr mx-1" min="10" max="144" value="60" aria-label="확대/축소">
    <button class="btn" aria-label="확대"><svg width="7" height="7" viewBox="0 0 7 7"><path d="M0 3.500h7M3.500 0v7" stroke="currentColor"/></svg></button>
    <span class="ms-2 ps-1 me-1">76%</span>
    <button class="btn ms-1 me-1" aria-label="창에 맞춤"><svg width="12" height="12"><use href="#fit"/></svg></button>
  </footer>
</section>

<!-- Excel -->
<section class="win xls">
  <header class="chrome">
    <div class="titlebar d-flex align-items-center">
      <button class="btn ib" aria-label="저장"><svg width="14" height="14"><use href="#savec"/></svg></button>
      <button class="btn ib ms-1" aria-label="실행 취소"><svg width="14" height="14"><use href="#undo"/></svg></button>
      <button class="btn cr" aria-label="실행 취소 목록"><svg width="6" height="4"><use href="#cv"/></svg></button>
      <button class="btn ib opacity-25" style="margin-left:5px" aria-label="다시 실행"><svg width="14" height="14"><use href="#redo"/></svg></button>
      <button class="btn cr opacity-25" aria-label="다시 실행 목록"><svg width="6" height="4"><use href="#cv"/></svg></button>
      <button class="btn ib" style="margin-left:2px" aria-label="터치"><svg width="12" height="15"><use href="#touch"/></svg></button>
      <button class="btn cr" aria-label="터치 목록"><svg width="6" height="4"><use href="#cv"/></svg></button>
      <button class="btn ib" style="margin-left:6px" aria-label="빠른 실행 사용자 지정"><svg width="8" height="8"><use href="#cust"/></svg></button>
      <div class="flex-fill" style="padding-left:20px">통합...</div>
      <button class="btn sys" aria-label="리본 표시 옵션"><svg width="13" height="11"><use href="#ropt"/></svg></button>
      <button class="btn sys" aria-label="최소화"><svg width="10" height="10"><use href="#min"/></svg></button>
      <button class="btn sys" aria-label="최대화"><svg width="10" height="10"><use href="#max"/></svg></button>
      <button class="btn sys" aria-label="닫기"><svg width="10" height="10"><use href="#cls"/></svg></button>
    </div>
    <nav class="tabs d-flex">
      <a href="#" class="filetab">파일</a><a href="#" class="on">홈</a><a href="#" class="cut">삽입</a><a href="#" class="cut">그리기</a><a href="#" class="cut">페이지 레</a><a href="#" class="cut">수식</a><a href="#" class="cut">데이터</a><a href="#" class="cut">검토</a><a href="#" class="cut">보기</a><a href="#" class="cut">도움말</a>
      <a href="#" class="ms-1"><svg width="12" height="15" class="me-2"><use href="#bulb"/></svg><span class="ms-1">입력하세</span></a>
      <a href="#" class="ms-auto me-2" aria-label="메모"><svg width="15" height="13"><use href="#cmt"/></svg></a>
    </nav>
  </header>

  <div class="ribbon d-flex">
    <div class="grp" style="width:89px">
      <div class="bodyrow" style="padding-left:7px">
        <button class="btn big" style="width:43px"><svg width="26" height="26"><use href="#paste"/></svg>붙여넣기<svg class="cv" width="6" height="4"><use href="#cv"/></svg></button>
        <div>
          <button class="btn ib" aria-label="잘라내기"><svg width="14" height="14"><use href="#cut"/></svg></button>
          <div class="d-flex"><button class="btn ib" aria-label="복사"><svg width="14" height="14"><use href="#copy"/></svg></button><button class="btn cr" aria-label="복사 목록"><svg width="6" height="4"><use href="#cv"/></svg></button></div>
          <button class="btn ib" aria-label="서식 복사"><svg width="14" height="14"><use href="#brushy"/></svg></button>
        </div>
      </div>
      <div class="foot"><span>클립보드</span><button class="btn launch" aria-label="클립보드 옵션"><svg width="9" height="9"><use href="#lch"/></svg></button></div>
    </div>
    <div class="sepv"></div>
    <div class="grp align-items-center" style="width:46px"><button class="btn boxed"><span class="frame"><svg width="16" height="18" viewBox="0 0 16 18"><text x="2" y="11" font-size="12" font-weight="500" fill="#444">가</text><path d="M1 14h14v3H1z" fill="#3f78b5"/></svg></span>글꼴<svg class="cv" width="6" height="4"><use href="#cv"/></svg></button></div>
    <div class="sepv"></div>
    <div class="grp align-items-center" style="width:46px"><button class="btn boxed"><span class="frame"><svg width="14" height="14"><use href="#ac"/></svg></span>맞춤<svg class="cv" width="6" height="4"><use href="#cv"/></svg></button></div>
    <div class="sepv"></div>
    <div class="grp align-items-center" style="width:47px"><button class="btn boxed"><span class="frame" style="font-size:13px">%</span><span class="lbl">표시 형<br>식 <svg class="d-inline" width="6" height="4"><use href="#cv"/></svg></span></button></div>
    <div class="sepv"></div>
    <div class="grp" style="width:101px">
      <div class="bodyrow flex-column ps-1">
        <button class="btn d-flex align-items-center" style="height:20px;padding-left:5px!important"><svg width="14" height="14" style="margin-right:2px"><use href="#cf"/></svg>조건부 서식<svg class="ms-1" width="6" height="4"><use href="#cv"/></svg></button>
        <button class="btn d-flex align-items-center" style="height:20px;padding-left:5px!important"><svg width="14" height="14" style="margin-right:2px"><use href="#tf"/></svg>표 서식<svg class="ms-1" width="6" height="4"><use href="#cv"/></svg></button>
        <button class="btn d-flex align-items-center" style="height:20px;padding-left:5px!important"><svg width="14" height="14" style="margin-right:2px"><use href="#cs"/></svg>셀 스타일<svg class="ms-1" width="6" height="4"><use href="#cv"/></svg></button>
      </div>
      <div class="foot"><span>스타일</span></div>
    </div>
    <div class="sepv"></div>
    <div class="grp align-items-center" style="width:46px"><button class="btn boxed"><span class="frame"><svg width="16" height="16"><use href="#cellsi"/></svg></span>셀<svg class="cv" width="6" height="4"><use href="#cv"/></svg></button></div>
    <div class="sepv"></div>
    <div class="grp align-items-center" style="width:45px"><button class="btn boxed"><span class="frame"><svg width="14" height="14"><use href="#find"/></svg></span>편집<svg class="cv" width="6" height="4"><use href="#cv"/></svg></button></div>
    <div class="sepv"></div>
    <button class="btn ms-auto align-self-end pb-1 pe-2" aria-label="리본 메뉴 축소"><svg width="12" height="7"><use href="#colp"/></svg></button>
  </div>

  <div class="fbar d-flex align-items-center">
    <select class="fbox namebox" aria-label="이름 상자"><option>E6</option></select>
    <svg width="26" height="12" viewBox="0 0 26 12"><path d="M13 1v10" stroke="#aaa" stroke-width="2" stroke-dasharray="2 2"/></svg>
    <div class="fbox fxb d-flex justify-content-around align-items-center">
      <button class="btn" aria-label="취소"><svg width="10" height="10" viewBox="0 0 10 10"><path d="m1 1 8 8M9 1 1 9" stroke="#b5b5b5" stroke-width="1.300"/></svg></button>
      <button class="btn" aria-label="입력"><svg width="11" height="10" viewBox="0 0 11 10"><path d="m1 5.500 3 3L10 1.500" stroke="#b5b5b5" stroke-width="1.600" fill="none"/></svg></button>
      <button class="btn fst-italic fxn" aria-label="함수 삽입">f<small>x</small></button>
    </div>
    <input class="fbox flex-fill" style="margin-left:3px;border-right:0" aria-label="수식 입력줄">
    <button class="fbox btn" style="width:16px;border:1px solid #cfcfcf;border-left:0" aria-label="수식 입력줄 확장"><svg width="8" height="6"><use href="#cv"/></svg></button>
  </div>

  <div class="d-flex flex-fill overflow-hidden" style="min-height:0">
    <div class="flex-fill overflow-hidden">
      <table class="gridt">
        <colgroup><col style="width:28px"><col style="width:61px"><col style="width:61px"><col style="width:61px"><col style="width:61px"><col style="width:61px"><col style="width:60px"><col style="width:61px"><col style="width:13px"></colgroup>
        <thead><tr><th><svg class="ms-auto" width="14" height="14" viewBox="0 0 14 14"><path d="M12 1v12H0z" fill="#b0b0b0"/></svg></th><th>A</th><th>B</th><th>C</th><th>D</th><th class="act">E</th><th>F</th><th>G</th><th></th></tr></thead>
        <tbody>
        <tr><th class="rn">1</th><td class="corner k"></td><td class="hx k">A</td><td class="hx k">B</td><td class="hx k">C</td><td class="hx k">D</td><td></td><td></td><td></td></tr>
        <tr><th class="rn">2</th><td class="hy k">서울</td><td class="k">10</td><td class="k">20</td><td class="k">30</td><td class="k">40</td><td></td><td></td><td></td></tr>
        <tr><th class="rn">3</th><td class="hy k">인천</td><td class="k">20</td><td class="k">30</td><td class="k">40</td><td class="k">50</td><td></td><td></td><td></td></tr>
        <tr><th class="rn">4</th><td class="hy k">부산</td><td class="k">30</td><td class="k">40</td><td class="k">50</td><td class="k">60</td><td></td><td></td><td></td></tr>
        <tr><th class="rn">5</th><td class="hy k">춘천</td><td class="k">40</td><td class="k">50</td><td class="k">60</td><td class="k">100</td><td></td><td></td><td></td></tr>
        <tr><th class="rn act">6</th><td></td><td></td><td></td><td></td><td class="cell"></td><td></td><td></td><td></td></tr>
        <tr><th class="rn">7</th><td></td><td></td><td></td><td></td><td></td><td></td><td></td><td></td></tr>
        <tr><th class="rn">8</th><td></td><td></td><td></td><td></td><td></td><td></td><td></td><td></td></tr>
        </tbody>
      </table>
    </div>
    <div class="vs d-flex flex-column">
      <button class="btn sb" aria-label="위로"><svg width="6" height="4"><use href="#tu"/></svg></button>
      <div class="vthumb"></div>
      <button class="btn sb mt-auto" aria-label="아래로"><svg width="6" height="4"><use href="#td"/></svg></button>
    </div>
  </div>

  <div class="sheets d-flex align-items-center">
    <span class="d-flex justify-content-center" style="width:84px;gap:20px;color:#b0b0b0;padding-right:10px"><svg width="4" height="6"><use href="#tl"/></svg><svg width="4" height="6"><use href="#tr"/></svg></span>
    <a href="#" class="sheet">Sheet1</a>
    <button class="btn" style="margin-left:27px" aria-label="새 시트"><svg width="14" height="14" viewBox="0 0 14 14"><circle cx="7" cy="7" r="6" fill="none" stroke="#777"/><path d="M7 4v6M4 7h6" stroke="#777" stroke-width="1.500"/></svg></button>
    <svg class="ms-auto me-2" width="4" height="10" viewBox="0 0 4 10"><path d="M2 0v10" stroke="#aaa" stroke-width="2" stroke-dasharray="2 2"/></svg>
    <button class="btn sb ms-1" aria-label="왼쪽으로"><svg width="4" height="6"><use href="#tl"/></svg></button>
    <div class="hthumb"></div>
    <button class="btn sb" style="margin-left:16px" aria-label="오른쪽으로"><svg width="4" height="6"><use href="#tr"/></svg></button>
  </div>

  <footer class="status d-flex align-items-center">
    <span>준비</span>
    <button class="btn d-flex align-items-center" style="margin-left:15px"><svg width="14" height="13" style="margin-right:1px"><use href="#acc"/></svg>접근성: 계속 진행 가능</button>
    <button class="btn view cur ms-auto" aria-label="기본"><svg width="12" height="11"><use href="#vgrid"/></svg></button>
    <button class="btn view" aria-label="페이지 레이아웃"><svg width="12" height="11"><use href="#vpage"/></svg></button>
    <button class="btn view" aria-label="페이지 나누기 미리 보기"><svg width="12" height="11"><use href="#vbrk"/></svg></button>
    <button class="btn ms-1" aria-label="축소"><svg width="7" height="7" viewBox="0 0 7 7"><path d="M0 3.500h7" stroke="currentColor"/></svg></button>
    <input type="range" class="zoomr mx-1" min="0" max="100" value="50" aria-label="확대/축소">
    <button class="btn" aria-label="확대"><svg width="7" height="7" viewBox="0 0 7 7"><path d="M0 3.500h7M3.500 0v7" stroke="currentColor"/></svg></button>
    <span class="ms-2 ps-1" style="margin-right:14px">100%</span>
  </footer>
</section>
</main>
<script src="https://cdn.jsdelivr.net/npm/bootstrap@5.3.0/dist/js/bootstrap.bundle.min.js"></script>
</body>
</html>
